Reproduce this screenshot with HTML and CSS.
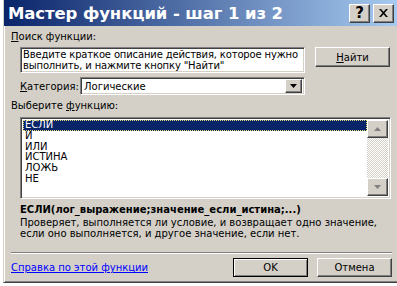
FILE: index.html
```html
<!DOCTYPE html>
<html lang="ru">
<head>
    <meta charset="UTF-8">
    <title>Мастер функций - шаг 1 из 2</title>
    <link rel="stylesheet" href="styles.css">
</head>
<body>
    <div class="window">
        <div class="titlebar">
            <span class="title">Мастер функций - шаг 1 из 2</span>
            <span class="tb-btn tb-help">?</span>
            <span class="tb-btn tb-close">
                <svg width="9" height="8" viewBox="0 0 9 8"><path d="M0 0h2l2.5 2.8L7 0h2L5.5 4 9 8H7L4.5 5.2 2 8H0l3.5-4z" fill="#000"/></svg>
            </span>
        </div>

        <div class="content">
            <div class="label"><u>П</u>оиск функции:</div>
            <div class="search-row">
                <div class="field search-text">Введите краткое описание действия, которое нужно<br>выполнить, и нажмите кнопку "Найти"</div>
                <div class="btn find-btn"><u>Н</u>айти</div>
            </div>

            <div class="cat-row">
                <span class="cat-label"><u>К</u>атегория:</span>
                <div class="field select">
                    <span class="select-value">Логические</span>
                    <span class="btn drop-btn">
                        <svg width="7" height="4" viewBox="0 0 7 4"><path d="M0 0h7L3.5 4z" fill="#000"/></svg>
                    </span>
                </div>
            </div>

            <div class="label list-label">Выберите <u>ф</u>ункцию:</div>
            <div class="field listbox">
                <ul class="items">
                    <li class="selected">ЕСЛИ</li>
                    <li>И</li>
                    <li>ИЛИ</li>
                    <li>ИСТИНА</li>
                    <li>ЛОЖЬ</li>
                    <li>НЕ</li>
                </ul>
                <div class="scrollbar">
                    <span class="btn sb-btn">
                        <svg width="7" height="4" viewBox="0 0 7 4"><path d="M3.5 0L7 4H0z" fill="#808080"/></svg>
                    </span>
                    <span class="sb-track"></span>
                    <span class="btn sb-btn">
                        <svg width="7" height="4" viewBox="0 0 7 4"><path d="M0 0h7L3.5 4z" fill="#808080"/></svg>
                    </span>
                </div>
            </div>

            <div class="syntax">ЕСЛИ(лог_выражение;значение_если_истина;...)</div>
            <div class="desc">Проверяет, выполняется ли условие, и возвращает одно значение,<br>если оно выполняется, и другое значение, если нет.</div>
        </div>

        <div class="separator"></div>

        <div class="footer">
            <a class="help-link" href="#">Справка по этой функции</a>
            <div class="btn ok-btn">OK</div>
            <div class="btn cancel-btn">Отмена</div>
        </div>
    </div>
</body>
</html>
```

FILE: styles.css
```css
/* фон листа за окном */
body {
    margin: 0;
    background: #fff;
    font-family: "DejaVu Sans", Verdana, sans-serif;
    font-size: 10px;
    color: #000;
}

/* окно диалога */
.window {
    margin-left: 3px;
    width: 394px;
    height: 283px;
    box-sizing: border-box;
    background: #d4d0c8;
    border-left: 1px solid #d4d0c8;
    border-bottom: 1px solid #404040;
    box-shadow: inset 1px 0 #fff, inset 0 -1px #808080;
    padding-left: 1px;
    display: flex;
    flex-direction: column;
}

/* заголовок */
.titlebar {
    height: 26px;
    margin-left: -1px;
    display: flex;
    align-items: center;
    padding: 0 3px 0 4px;
    background: linear-gradient(to right, #0a246a, #a6caf0);
}

.title {
    flex: 1;
    color: #fff;
    font-weight: bold;
    font-size: 16.5px;
    letter-spacing: -0.1px;
}

.tb-btn {
    width: 21px;
    height: 19px;
    box-sizing: border-box;
    display: flex;
    align-items: center;
    justify-content: center;
    background: #d4d0c8;
    border: 1px solid;
    border-color: #fff #404040 #404040 #fff;
    box-shadow: inset -1px -1px #808080;
    font-weight: bold;
    font-size: 15px;
}

.tb-help {
    margin-right: 3px;
}

/* содержимое */
.content {
    padding: 4px 6px 0 6px;
}

u {
    text-decoration: underline;
    text-underline-offset: 1px;
}

.label {
    line-height: 13px;
}

/* 3D-рамки */
.field {
    background: #fff;
    box-sizing: border-box;
    border: 1px solid;
    border-color: #808080 #fff #fff #808080;
    box-shadow: inset 1px 1px #404040, inset -1px -1px #d4d0c8;
}

.btn {
    background: #d4d0c8;
    box-sizing: border-box;
    border: 1px solid;
    border-color: #fff #404040 #404040 #fff;
    box-shadow: inset -1px -1px #808080;
    display: flex;
    align-items: center;
    justify-content: center;
}

/* строка поиска */
.search-row {
    display: flex;
    align-items: flex-start;
    margin: 4px 0 0 9px;
}

.search-text {
    width: 285px;
    height: 26px;
    padding: 2px 2px;
    line-height: 10.5px;
    letter-spacing: -0.15px;
    white-space: nowrap;
    overflow: hidden;
}

.find-btn {
    width: 75px;
    height: 20px;
    margin-left: 10px;
}

/* категория */
.cat-row {
    display: flex;
    align-items: center;
    margin: 4px 0 0 9px;
}

.cat-label {
    width: 60px;
}

.select {
    width: 225px;
    height: 18px;
    display: flex;
    align-items: center;
    padding: 2px 2px 2px 3px;
}

.select-value {
    flex: 1;
}

.drop-btn {
    width: 17px;
    height: 14px;
}

/* список функций */
.list-label {
    margin-top: 4px;
}

.listbox {
    margin: 5px 0 0 9px;
    height: 82px;
    display: flex;
    padding: 2px;
}

.items {
    flex: 1;
    list-style: none;
    margin: 0;
    padding: 0;
}

.items li {
    line-height: 10.8px;
    padding-left: 2px;
}

.items .selected {
    background: #0a246a;
    color: #fff;
    outline: 1px dotted #e8e070;
    outline-offset: -1px;
}

.scrollbar {
    width: 21px;
    display: flex;
    flex-direction: column;
}

.sb-btn {
    height: 18px;
}

.sb-track {
    flex: 1;
    background-image: repeating-conic-gradient(#fff 0 25%, #d4d0c8 0 50%);
    background-size: 2px 2px;
}

/* описание */
.syntax {
    margin: 4px 0 0 9px;
    font-weight: bold;
    line-height: 13px;
}

.desc {
    margin: 2px 0 0 9px;
    line-height: 10.5px;
}

.separator {
    margin: 13px 5px 0 6px;
    border-top: 1px solid #808080;
    border-bottom: 1px solid #fff;
}

/* нижняя панель */
.footer {
    display: flex;
    align-items: center;
    padding: 4px 5px 0 6px;
}

.help-link {
    flex: 1;
    color: #0000ff;
    text-decoration: underline;
}

.ok-btn,
.cancel-btn {
    width: 75px;
    height: 19px;
}

.ok-btn {
    border-color: #000;
    box-shadow: inset 1px 1px #fff, inset -1px -1px #808080;
    margin-right: 9px;
}
```
